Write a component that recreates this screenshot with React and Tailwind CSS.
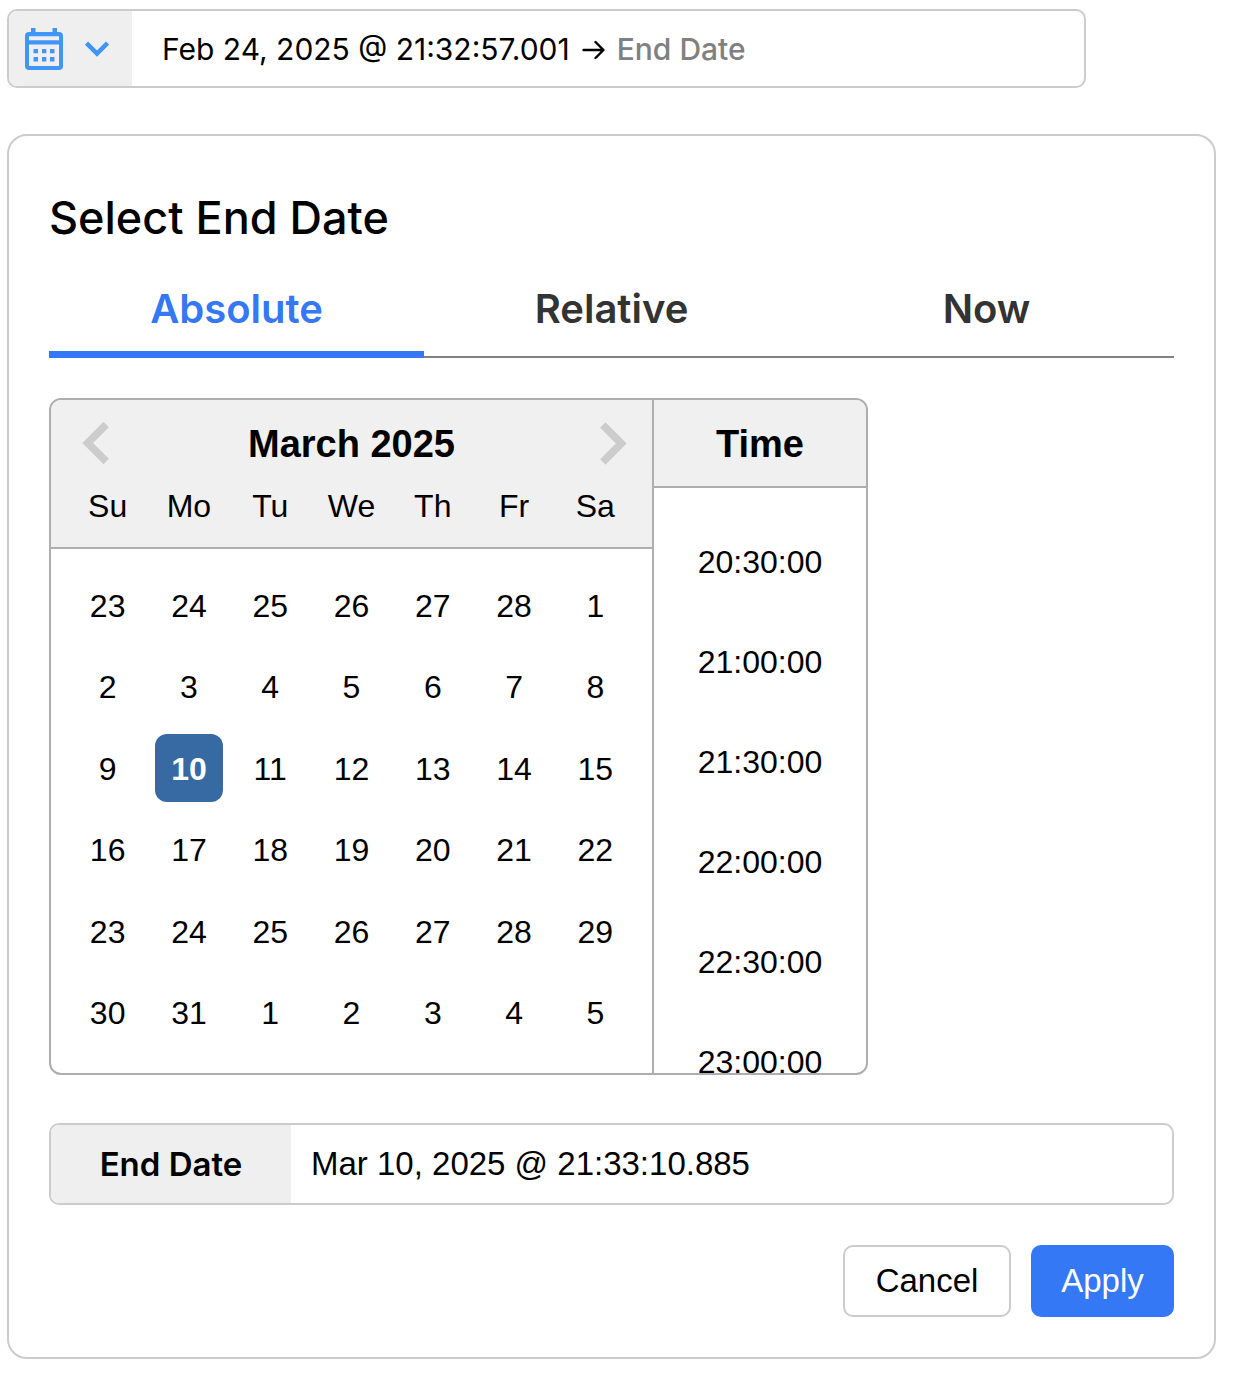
import { useState } from "react";

const weekdays = ["Su", "Mo", "Tu", "We", "Th", "Fr", "Sa"];

const days = [
  23, 24, 25, 26, 27, 28, 1,
  2, 3, 4, 5, 6, 7, 8,
  9, 10, 11, 12, 13, 14, 15,
  16, 17, 18, 19, 20, 21, 22,
  23, 24, 25, 26, 27, 28, 29,
  30, 31, 1, 2, 3, 4, 5,
];

const times = ["20:30:00", "21:00:00", "21:30:00", "22:00:00", "22:30:00", "23:00:00"];

const tabs = ["Absolute", "Relative", "Now"];

function CalendarIcon() {
  return (
    <svg width="38" height="42" viewBox="0 0 38 42" fill="#4096f7" aria-hidden="true">
      <path
        fillRule="evenodd"
        d="M6 0h4.500v4h17V0H32v4h2a4 4 0 0 1 4 4v30a4 4 0 0 1-4 4H4a4 4 0 0 1-4-4V8a4 4 0 0 1 4-4h2zM4 8.300v4h30v-4zM4 16.500V38h30V16.500z"
      />
      <path d="M8.500 21h4.500v4.300H8.500zM17 21h4.300v4.300H17zM25 21h4.500v4.300H25zM8.500 29h4.500v4.500H8.500zM17 29h4.300v4.500H17zM25 29h4.500v4.500H25z" />
    </svg>
  );
}

function NavChevron({ next }) {
  return (
    <svg width="27" height="43" viewBox="0 0 27 43" fill="none" stroke="#ccc" strokeWidth="7.600" aria-hidden="true">
      <path d={next ? "M2.800 3L21.300 21.500 2.800 40" : "M24.200 2.500L5.700 21 24.200 39.500"} />
    </svg>
  );
}

export default function App() {
  const [tab, setTab] = useState("Absolute");
  const [selected, setSelected] = useState(15);
  const [value, setValue] = useState("Mar 10, 2025 @ 21:33:10.885");

  return (
    <main className="bg-white pt-[9px] pr-[18px] pb-5 pl-[7px] font-['Inter',sans-serif] text-black">
      <div className="mr-[130px] flex h-[79px] overflow-hidden rounded-[10px] border-2 border-[#ccc]">
        <button
          type="button"
          aria-label="Choose a quick date range"
          className="flex w-[123px] shrink-0 items-center gap-[22px] bg-[#efefef] pl-4"
        >
          <CalendarIcon />
          <svg width="24" height="16" viewBox="0 0 24 16" fill="none" stroke="#4096f7" strokeWidth="4.500" aria-hidden="true">
            <path d="M1.500 2L12 12.500 22.500 2" />
          </svg>
        </button>
        <div className="flex items-center gap-3 pt-[2px] pl-[30px] text-[30px]">
          <button type="button">Feb 24, 2025 @ 21:32:57.001</button>
          <svg width="23" height="20" viewBox="0 0 23 20" fill="none" stroke="#000" strokeWidth="2.400" strokeLinecap="round" strokeLinejoin="round" aria-hidden="true">
            <path d="M1.500 10H21M13.500 2L21.500 10l-8 8" />
          </svg>
          <button type="button" className="font-medium text-[#808080]">End Date</button>
        </div>
      </div>

      <section className="mt-[46px] rounded-[20px] border-2 border-[#ccc] p-10">
        <h1 className="mt-3 text-[45px] leading-[60px] font-medium">Select End Date</h1>

        <div role="tablist" className="mt-5 grid h-[90px] grid-cols-3 border-b-2 border-[#808080]">
          {tabs.map((name) => (
            <button
              key={name}
              type="button"
              role="tab"
              aria-selected={tab === name}
              onClick={() => setTab(name)}
              className={
                tab === name
                  ? "-mb-[2px] border-b-[7px] border-[#3478f6] pb-[2px] text-[40px] font-semibold text-[#3478f6]"
                  : "pb-[7px] text-[40px] font-semibold text-[#333]"
              }
            >
              {name}
            </button>
          ))}
        </div>

        <div className="mt-10 flex w-[819px] max-w-full overflow-hidden rounded-[12px] border-2 border-[#aeaeae] font-['Liberation_Sans',Arial,sans-serif]">
          <div className="flex-1 border-r-2 border-[#aeaeae]">
            <div className="border-b-2 border-[#aeaeae] bg-[#f0f0f0] px-4 pb-5">
              <div className="flex h-[86px] items-center justify-between px-[9px]">
                <button type="button" aria-label="Previous month" className="flex w-[33px] justify-end">
                  <NavChevron />
                </button>
                <h2 className="pt-[2px] text-[38px] font-bold">March 2025</h2>
                <button type="button" aria-label="Next month" className="flex w-[33px] justify-end">
                  <NavChevron next />
                </button>
              </div>
              <div className="grid grid-cols-7 text-center text-[32px] leading-[41px]">
                {weekdays.map((d) => (
                  <span key={d}>{d}</span>
                ))}
              </div>
            </div>
            <div className="px-4 pt-[15px] pb-5">
              <div className="grid h-[489px] grid-cols-7 grid-rows-6 place-items-center text-[32px]">
                {days.map((d, i) => (
                  <button
                    key={i}
                    type="button"
                    aria-pressed={i === selected}
                    onClick={() => setSelected(i)}
                    className={
                      i === selected
                        ? "size-[68px] rounded-[12px] bg-[#376aa2] pt-[2px] font-bold text-white"
                        : "size-[68px] rounded-[12px] pt-[2px]"
                    }
                  >
                    {d}
                  </button>
                ))}
              </div>
            </div>
          </div>
          <div className="flex w-[212px] shrink-0 flex-col">
            <h2 className="flex h-[88px] shrink-0 items-center justify-center border-b-2 border-[#aeaeae] bg-[#f0f0f0] pt-[2px] text-[38px] font-bold">
              Time
            </h2>
            <ul className="h-0 grow overflow-hidden pt-6 text-[32px]">
              {times.map((t) => (
                <li key={t}>
                  <button type="button" className="h-[100px] w-full">{t}</button>
                </li>
              ))}
            </ul>
          </div>
        </div>

        <div className="mt-12 flex h-[82px] overflow-hidden rounded-[10px] border-2 border-[#ccc]">
          <label htmlFor="end-date" className="flex w-60 shrink-0 items-center justify-center bg-[#efefef] pt-[2px] text-[33px] font-semibold">
            End Date
          </label>
          <input
            id="end-date"
            type="text"
            value={value}
            onChange={(e) => setValue(e.target.value)}
            className="min-w-0 flex-1 px-5 font-['Liberation_Sans',Arial,sans-serif] text-[33px] outline-none"
          />
        </div>

        <div className="mt-10 flex justify-end gap-5 font-['Liberation_Sans',Arial,sans-serif] text-[33px]">
          <button type="button" className="h-[72px] w-[168px] rounded-[10px] border-2 border-[#ccc]">
            Cancel
          </button>
          <button type="button" className="h-[72px] w-[143px] rounded-[10px] bg-[#3478f6] text-white">
            Apply
          </button>
        </div>
      </section>
    </main>
  );
}
